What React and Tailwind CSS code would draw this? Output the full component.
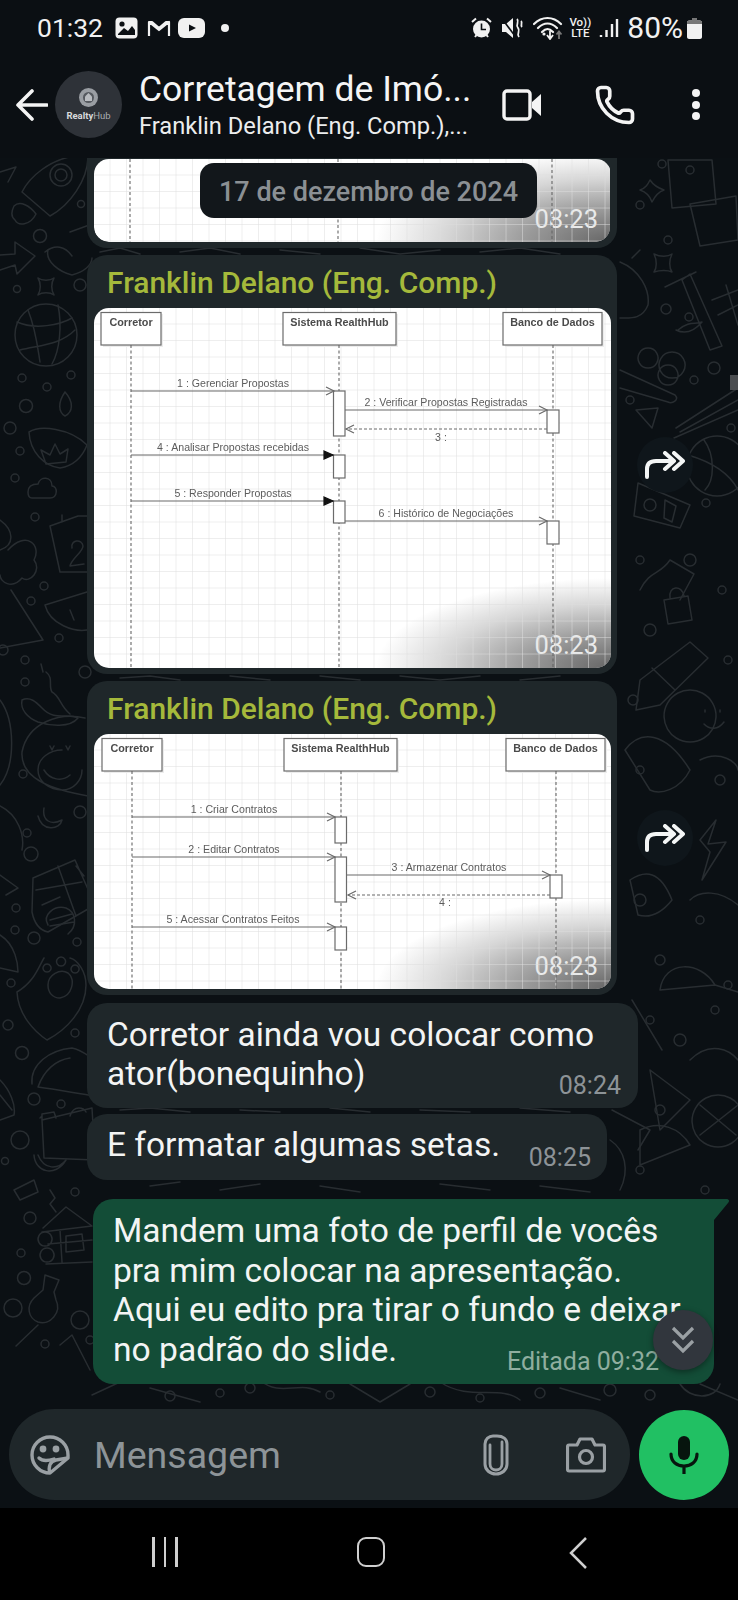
import React from "react";
import { Phone } from "lucide-react";

const Ic = ({ w, h, vb, className = "", children }) => (
  <svg width={w} height={h} viewBox={vb || `0 0 ${w} ${h}`} className={"shrink-0 " + className}>{children}</svg>
);

function Doodles() {
  const dots = [
    [40,236,6.5],[81,204,3.5],[17,289,3.5],[80,285,6],[22,378,4],[47,387,4],[71,375,4],[26,406,6.5],[10,428,6],[20,451,4],[15,478,4],[35,517,4],[44,586,4],[31,601,4],[59,638,4],[25,660,4],[3,650,5],
    [25,682,4],[85,672,6],[23,774,4],[27,833,4],[80,812,6],[31,854,7],[16,908,4],[15,930,4],[34,938,6],[77,942,4],[11,983,4],[8,1025,5],[75,1033,4],[22,1053,6.5],[34,1099,6],[61,1104,4],[20,1140,9],[5,1161,3.5],[75,1192,4],[30,1218,6],[21,1253,4],[24,1278,6.5],[13,1308,9],[45,1344,4],[80,1320,9],[90,1340,4],
    [662,164,4],[690,170,4],[640,205,4],[668,240,4],[666,309,5],[689,317,4],[714,368,6],[694,380,4],[630,400,4],[731,428,4],[706,503,4],[650,505,6],[640,560,4],[690,560,6],[722,590,4],[650,630,6],[633,700,5],[728,660,4],[640,770,4],[720,780,5],[640,900,6],[700,920,4],[660,960,5],[728,985,4],[650,1020,4],[680,1040,6],[715,1010,4],[660,1110,5],[640,1170,4],[705,1190,4],[650,1395,5],[610,1390,6],[250,1388,5],[220,1393,4],[170,1396,5],[430,1392,5],[330,1395,4],[540,1393,5],[480,1398,4],
  ];
  const paths = [
    "M22 192C30 176 50 160 74 156L88 156C88 180 70 205 50 216Z M22 192L50 216 M14 206C20 200 30 206 36 214C30 226 18 226 15 220C10 216 12 210 14 206Z",
    "M0 172L16 167L8 182 M0 255L15 254L15 242L35 256L17 274L15 265L0 270",
    "M48 250C45 262 60 272 72 275C84 272 92 265 92 258M70 232L92 224 M45 252C55 244 65 246 72 256",
    "M38 278C42 281 50 281 54 278C51 283 51 290 54 295C50 292 42 292 38 295C41 290 41 283 38 278Z",
    "M29 432C40 425 70 428 87 445M29 432C30 452 44 466 60 468C72 466 82 458 87 445M65 392C58 402 58 412 65 416C73 412 74 402 65 392M41 450L50 455L55 444L60 454L68 449L66 462M41 450L46 464L66 462",
    "M28 492C28 484 36 484 38 484C40 476 52 476 52 486C58 486 58 498 50 498L32 498C28 498 28 494 28 492Z",
    "M50 526L78 516L92 516M50 526L60 572L92 572 M62 522L62 515M72 548C70 540 82 538 83 546C83 552 72 558 70 566L84 564",
    "M0 520C14 530 15 545 0 550M8 550C26 530 42 545 34 560C42 570 30 584 22 578C12 590 0 582 0 575M11 590L43 640L0 648",
    "M45 605C50 625 75 632 87 630M45 605L87 592M70 610L74 620",
    "M22 700C30 696 36 702 42 708C55 722 68 712 78 718C70 728 50 726 38 722C28 718 20 710 22 700ZM46 672C54 678 48 686 52 692C60 696 60 706 70 714M43 672L41 664",
    "M85 718C60 712 28 722 22 752C20 780 55 790 88 796M62 750C50 750 38 758 38 770C38 782 50 790 62 790C74 790 82 780 82 770M44 770C50 780 62 782 70 775M50 746L52 750L54 746M66 746L68 750L70 746",
    "M0 700C15 720 16 765 0 785M0 806C18 815 25 835 22 850M38 816C42 832 60 830 62 820C50 826 42 820 44 808",
    "M33 878L75 860L95 905L48 932C38 930 34 922 32 912ZM36 890L82 882M58 866L76 916M42 905L60 897M76 866L84 876",
    "M48 925C42 915 54 905 66 908C76 912 78 926 68 934M50 920L72 914M50 926L74 922",
    "M0 875L18 888L6 895M0 935C16 945 18 965 18 972L0 968",
    "M44 958C38 968 34 982 17 992C18 1015 35 1032 47 1040C66 1030 86 1010 86 985C86 972 78 960 70 958M48 985C48 975 60 968 68 973C76 980 72 996 60 998C52 998 48 992 48 985ZM47 964a4 4 0 1 0 0.1 0ZM61 957a4.5 4.5 0 1 0 0.1 0ZM75 965a4 4 0 1 0 0.1 0Z",
    "M32 1084C30 1064 50 1050 72 1048C82 1050 88 1056 95 1060M38 1087C60 1090 80 1094 95 1096M38 1087C44 1070 56 1060 70 1058",
    "M0 1080C10 1090 16 1105 14 1115L0 1120M0 1095L12 1110",
    "M42 1120L92 1108L95 1160L44 1158ZM42 1116L40 1118M42 1120L42 1114L54 1112L56 1118M70 1116C74 1104 84 1108 86 1112M34 1155C35 1172 55 1178 66 1160C58 1170 44 1170 38 1155",
    "M14 1190L34 1180L38 1192L20 1200Z",
    "M43 1228L66 1207L92 1226M42 1232L92 1226M48 1244L92 1240M46 1264L92 1262M60 1230L62 1262M66 1236L82 1234L84 1250L66 1252ZM45 1232a7 7 0 1 0 0.1 0ZM47 1248a7 7 0 1 0 0.1 0Z",
    "M50 1190L55 1198L50 1204L56 1212",
    "M45 1275L59 1280L54 1292L56 1300C62 1312 50 1326 38 1322C28 1318 26 1306 34 1298L43 1290ZM16 1346L38 1325",
    "M60 1345L72 1335L90 1370",
    "M668 160L712 160L716 204L672 208ZM690 204L736 196L738 240L700 246ZM650 180C654 186 658 188 664 190C658 192 654 198 652 202C650 196 646 192 640 190C646 188 648 184 650 180Z",
    "M620 262C640 270 650 290 648 305C642 320 630 318 620 318M632 258L640 250",
    "M654 254C660 257 668 257 672 254C669 260 669 268 672 272C668 270 660 270 654 272C657 268 657 260 654 254Z",
    "M690 274L722 346L710 350L682 280ZM665 287L696 272M678 330C690 320 695 325 702 322C690 336 680 332 676 330M712 300L738 290M718 315L738 305M726 285L738 325",
    "M620 370L675 395C680 400 672 404 668 402L620 388M648 348a10 10 0 1 0 0.1 0ZM672 352a13 13 0 1 0 0.1 0ZM668 365a10 10 0 1 0 0.1 0Z",
    "M676 428L738 388M680 432L738 400M674 438L738 410",
    "M636 410L658 408L652 428Z",
    "M717 436a30 30 0 1 0 0.1 0ZM688 455C705 460 728 470 738 490M704 440C715 455 715 480 705 490",
    "M638 483L690 505L680 528L634 516ZM665 500L676 506L672 522L664 518Z",
    "M664 600L688 596L692 620L668 624ZM670 598C668 586 682 584 684 596",
    "M640 680L690 642L708 658L660 705L636 710ZM652 668L675 690",
    "M690 690a26 26 0 1 0 0.1 0ZM705 710L705 712M720 710L720 712M704 724C710 730 718 730 724 722",
    "M640 590C650 570 660 575 670 560L694 574L680 600",
    "M625 750C640 730 665 730 690 770C680 790 660 795 650 790ZM700 760C720 750 738 762 738 770",
    "M700 840L716 820L708 844L726 842L702 880L710 852Z",
    "M630 880C645 870 660 870 672 900C660 915 648 918 638 915ZM690 900C700 890 720 890 738 905",
    "M660 990C664 960 700 960 715 985L738 992M660 990L715 985",
    "M632 1000L662 1050M690 1060C710 1040 730 1050 738 1060M650 1070L690 1100L660 1130Z",
    "M718 1095a26 26 0 1 0 0.1 0ZM700 1105L736 1135M738 1105L700 1135",
    "M640 1130C660 1120 680 1128 690 1145L640 1165Z",
    "M92 1395L120 1382M150 1388L200 1402M260 1380C280 1398 300 1380 320 1392M350 1384L380 1402L410 1384M440 1382C470 1402 500 1384 520 1400M560 1388L600 1400",
    "M100 252L120 248L140 254M180 252L210 248L240 254M280 250L320 254M360 248L400 254L440 250M480 252L520 248L560 254M120 678L150 676L180 680M230 676L270 680M320 676L360 680M400 676L440 680L480 676M520 680L560 676M120 1110L150 1108L190 1112M240 1110L280 1112M330 1108L370 1112M420 1110L470 1112M520 1108L570 1112M150 1186L180 1182M220 1190L260 1184M320 1186L360 1192M440 1184L490 1190M540 1186L590 1192",
    "M612 1110L650 1130L638 1150M610 1140C625 1150 630 1170 620 1190",
    "M700 1384L738 1400M680 1384C690 1400 715 1400 720 1384",
  ];
  return (
    <svg width="738" height="1350" viewBox="0 158 738 1350" className="absolute left-0 top-0 blur-[0.4px]" fill="none" stroke="#282d31" strokeWidth="1.5" strokeLinecap="round" strokeLinejoin="round">
      {paths.map((d, i) => <path key={i} d={d} />)}
      {dots.map(([x, y, r], i) => <circle key={i} cx={x} cy={y} r={r} />)}
      <circle cx="61" cy="175" r="11" /><circle cx="61" cy="175" r="6" />
      <circle cx="46" cy="335" r="31" />
      <path d="M17 322C35 330 60 325 72 318M20 350C40 345 60 345 75 330M28 310C36 330 38 350 40 362M58 305C62 325 60 350 52 364" />
    </svg>
  );
}

const Box = ({ x, w, label }) => (
  <g>
    <rect x={x + 2} y={6} width={w} height={33} fill="#ececec" />
    <rect x={x} y={4.5} width={w} height={32.5} fill="#fff" stroke="#6b6b6b" strokeWidth="1.2" />
    <text x={x + w / 2} y={17.5} textAnchor="middle" fontFamily="'Liberation Sans', sans-serif" fontWeight="700" fontSize="10.8" fill="#4b4b4b">{label}</text>
  </g>
);

function Diagram({ id, h, boxes, lines, acts, arrows, labels, scrim }) {
  return (
    <div className="grid w-[517px] grid-rows-[minmax(0,1fr)] overflow-hidden rounded-[15px] bg-white" style={{ height: h }}>
      <svg width="517" height={h} viewBox={`0 0 517 ${h}`} className="col-start-1 row-start-1 block blur-[0.35px]">
        <defs>
          <pattern id={id} width="16.5" height="16.5" patternUnits="userSpaceOnUse">
            <path d="M16.5 0V16.5H0" fill="none" stroke="#dedede" strokeWidth="1" />
          </pattern>
        </defs>
        <rect width="517" height={h} fill={`url(#${id})`} />
        {boxes && boxes.map((b) => <Box key={b.label} {...b} />)}
        {lines.map((x, i) => <line key={i} x1={x} x2={x} y1={boxes ? 37 : 0} y2={h} stroke="#666" strokeWidth="1.1" strokeDasharray="3 2.5" />)}
        {acts && acts.map(([x, y, w, ah], i) => <rect key={i} x={x} y={y} width={w} height={ah} fill="#fff" stroke="#6b6b6b" strokeWidth="1.2" />)}
        {arrows && arrows.map(([x1, x2, y, kind], i) => (
          <g key={i} stroke="#6a6a6a" strokeWidth="1.2" fill="none">
            <line x1={x1} x2={x2} y1={y} y2={y} strokeDasharray={kind === "dash" ? "3 2" : undefined} />
            {kind === "fill" ? (
              <polygon points={`${x2 - 9},${y - 4} ${x2},${y} ${x2 - 9},${y + 4}`} fill="#111" stroke="#111" />
            ) : kind === "dash" ? (
              <polyline points={`${x2 + 8},${y - 4} ${x2},${y} ${x2 + 8},${y + 4}`} />
            ) : (
              <polyline points={`${x2 - 8},${y - 4} ${x2},${y} ${x2 - 8},${y + 4}`} />
            )}
          </g>
        ))}
        {labels && labels.map(([t, x, y], i) => (
          <text key={i} x={x} y={y} textAnchor="middle" fontFamily="'Liberation Sans', sans-serif" fontSize="10.6" fill="#5c5c5c">{t}</text>
        ))}
      </svg>
      {scrim}
      <div className="col-start-1 row-start-1 self-end justify-self-end pr-[13px] pb-[8px] text-[25.5px] leading-[30px] text-[#e9eaea]">08:23</div>
    </div>
  );
}

const Scrim = () => (
  <div className="col-start-1 row-start-1 self-end justify-self-end w-[240px] h-[92px] bg-[radial-gradient(ellipse_235px_90px_at_100%_100%,rgba(50,50,50,0.75)_0%,rgba(50,50,50,0.5)_35%,rgba(50,50,50,0.2)_70%,rgba(50,50,50,0)_100%)]" />
);

function ForwardBtn() {
  return (
    <div className="ml-[20px] flex h-[56px] w-[56px] items-center justify-center rounded-full bg-[#0f161b]">
      <Ic w={40} h={28} vb="0 0 40 28">
        <path d="M2 26V18C2 12 6 10 11 10H27" fill="none" stroke="#f4f6f6" strokeWidth="4" strokeLinecap="round" strokeLinejoin="round" />
        <path d="M20 2L29 10L20 18M29 2L38 10L29 18" fill="none" stroke="#f4f6f6" strokeWidth="4" strokeLinecap="round" strokeLinejoin="round" />
      </Ic>
    </div>
  );
}

function Incoming({ name, children }) {
  return (
    <div className="flex items-center pl-[87px]">
      <div className="w-[530px] rounded-[20px] bg-[#1f272a] px-[7px] pb-[6px]">
        <div className="h-[53px] pl-[13px] pt-[10px] text-[30px] font-medium leading-[36px] text-[#a5b93b]">{name}</div>
        {children}
      </div>
      <ForwardBtn />
    </div>
  );
}

export default function App() {
  return (
    <div className="flex h-[1600px] w-[738px] flex-col overflow-hidden bg-[#0b0f13] font-['Roboto',sans-serif] text-white">
      {/* status bar */}
      <div className="flex h-[56px] items-center justify-between pl-[37px] pr-[36px]">
        <div className="flex items-center">
          <span className="text-[26.5px] leading-[30px] text-[#f1f1f1]">01:32</span>
          <Ic w={23} h={22} className="ml-[12px]"><rect x="0.5" y="0.5" width="22" height="21" rx="4" fill="#f1f1f1" /><circle cx="7" cy="7" r="2.6" fill="#0b0f13" /><path d="M3 17L9 11L13 14L17 9L20 13V18H3Z" fill="#0b0f13" /></Ic>
          <Ic w={24} h={19} className="ml-[9px]"><path d="M2 17V3L12 11L22 3V17M2 3H5L12 9L19 3H22" fill="none" stroke="#f1f1f1" strokeWidth="2.2" strokeLinejoin="round" /></Ic>
          <Ic w={27} h={20} className="ml-[7px]"><rect width="27" height="20" rx="6" fill="#f1f1f1" /><path d="M11 6.5L18 10L11 13.5Z" fill="#0b0f13" /></Ic>
          <span className="ml-[16px] h-[8px] w-[8px] rounded-full bg-[#f1f1f1]" />
        </div>
        <div className="flex items-center">
          <Ic w={21} h={22}><circle cx="10.5" cy="12" r="8.5" fill="#f1f1f1" /><path d="M10.5 6.5V12.5H15" fill="none" stroke="#0b0f13" strokeWidth="1.6" /><path d="M1 5L5 1.5M20 5L16 1.5M4 20L5.5 18M17 20L15.5 18" stroke="#f1f1f1" strokeWidth="2" /></Ic>
          <Ic w={21} h={20} className="ml-[10px]"><path d="M0 6H4L11 0V20L4 14H0Z" fill="#f1f1f1" /><path d="M1 2L13 18" stroke="#0b0f13" strokeWidth="1.6" /><path d="M15 1C18 4 13 6 16 10C19 13 14 15 17 19M19 3C21 5 18 7 20 9" fill="none" stroke="#f1f1f1" strokeWidth="1.8" /></Ic>
          <Ic w={30} h={24} className="ml-[10px]"><path d="M1 8C9 0 20 0 28 8M5 12C11 6 18 6 24 12M9 16C13 12 16 12 20 16" fill="none" stroke="#f1f1f1" strokeWidth="2.2" strokeLinecap="round" /><path d="M17 15V22M14 19L17 23L20 19" fill="none" stroke="#f1f1f1" strokeWidth="1.8" /><path d="M26 23V16M23.5 18.5L26 15.5L28.5 18.5" fill="none" stroke="#777" strokeWidth="1.8" /><circle cx="11" cy="18" r="1.6" fill="#f1f1f1" /></Ic>
          <div className="ml-[6px] flex w-[22px] flex-col items-center text-[11.5px] font-medium leading-[11px] text-[#f1f1f1]"><span>Vo))</span><span>LTE</span></div>
          <Ic w={20} h={22} className="ml-[8px]"><path d="M2 18V20M7.5 13V20M13 7V20M18 2V20" stroke="#f1f1f1" strokeWidth="2.4" /></Ic>
          <span className="ml-[8px] text-[30px] leading-[30px] text-[#f1f1f1]">80%</span>
          <Ic w={15} h={21} className="ml-[4px]"><path d="M5 0H10V2.5H13C14 2.5 15 3.5 15 4.5V19C15 20 14 21 13 21H2C1 21 0 20 0 19V4.5C0 3.5 1 2.5 2 2.5H5Z" fill="#f1f1f1" /><path d="M5 0H10V2.5H13C14 2.5 15 3.5 15 4.5V6H0V4.5C0 3.5 1 2.5 2 2.5H5Z" fill="#777" /></Ic>
        </div>
      </div>

      {/* header */}
      <div className="flex h-[102px] items-center pb-[5px] pl-[16px]">
        <Ic w={32} h={32}><path d="M31 16H2M16 2L2 16L16 30" fill="none" stroke="#f4f4f4" strokeWidth="3.6" strokeLinecap="round" strokeLinejoin="round" /></Ic>
        <div className="ml-[7px] flex h-[67px] w-[67px] shrink-0 flex-col items-center justify-center rounded-full bg-[#2e3238]">
          <Ic w={21} h={21}><circle cx="10.5" cy="10.5" r="9.5" fill="#9a9ea3" /><circle cx="10.5" cy="10.5" r="5.5" fill="#55595f" /><path d="M10.5 6L14 9.5V14H7V9.5Z" fill="#b9bcc0" /></Ic>
          <div className="mt-[2px] text-[9.5px] font-bold leading-[12px] text-[#d8dadc]">Realty<span className="font-normal text-[#a9adb1]">Hub</span></div>
        </div>
        <div className="ml-[17px] w-[340px] shrink-0">
          <div className="whitespace-nowrap text-[35.5px] leading-[41px] text-[#f5f5f5]">Corretagem de Imó...</div>
          <div className="mt-[2px] whitespace-nowrap text-[23.7px] leading-[28px] text-[#ecedee]">Franklin Delano (Eng. Comp.),...</div>
        </div>
        <Ic w={40} h={32} className="ml-[23px]"><rect x="2" y="2" width="26" height="28" rx="3" fill="none" stroke="#f4f4f4" strokeWidth="3.4" /><path d="M30 13L39 5V27L30 19Z" fill="#f4f4f4" /></Ic>
        <Phone size={42} strokeWidth={2.1} color="#f4f4f4" className="ml-[52px] shrink-0" />
        <div className="ml-[56px] flex flex-col gap-[3.5px]">
          <span className="h-[8px] w-[8px] rounded-full bg-[#f4f4f4]" />
          <span className="h-[8px] w-[8px] rounded-full bg-[#f4f4f4]" />
          <span className="h-[8px] w-[8px] rounded-full bg-[#f4f4f4]" />
        </div>
      </div>

      {/* chat */}
      <div className="relative h-[1350px] overflow-hidden bg-[#0b1014]">
        <Doodles />
        <div className="relative flex flex-col">
          {/* clipped bubble */}
          <div className="ml-[87px] w-[530px] rounded-b-[20px] bg-[#1f272a] px-[7px] pb-[6px] pt-[1px]">
            <div className="overflow-hidden rounded-b-[15px]">
              <Diagram id="g1" h={83} lines={[36, 244, 458]} scrim={<Scrim />} />
            </div>
          </div>

          <div className="mt-[7px]">
            <Incoming name="Franklin Delano (Eng. Comp.)">
              <Diagram
                id="g2"
                h={360}
                boxes={[{ x: 7, w: 60, label: "Corretor" }, { x: 189, w: 113, label: "Sistema RealthHub" }, { x: 409, w: 99, label: "Banco de Dados" }]}
                lines={[37, 245, 459]}
                acts={[[239.5, 83, 11.5, 45], [453, 102, 12, 23], [239.5, 147, 11.5, 23], [239.5, 193, 11.5, 22], [453, 213, 12, 23]]}
                arrows={[[37, 240, 83], [251, 453, 102], [453, 252, 121, "dash"], [37, 239, 147, "fill"], [37, 239, 193, "fill"], [251, 453, 213]]}
                labels={[["1 : Gerenciar Propostas", 139, 79], ["2 : Verificar Propostas Registradas", 352, 98], ["3 :", 347, 133], ["4 : Analisar Propostas recebidas", 139, 143], ["5 : Responder Propostas", 139, 189], ["6 : Histórico de Negociações", 352, 209]]}
                scrim={<Scrim />}
              />
            </Incoming>
          </div>

          <div className="mt-[7px]">
            <Incoming name="Franklin Delano (Eng. Comp.)">
              <Diagram
                id="g3"
                h={255}
                boxes={[{ x: 8, w: 60, label: "Corretor" }, { x: 190, w: 113, label: "Sistema RealthHub" }, { x: 412, w: 99, label: "Banco de Dados" }]}
                lines={[38, 247, 462]}
                acts={[[241, 83, 11.5, 26], [241, 123, 11.5, 45], [456, 141, 12, 23], [241, 193, 11.5, 23]]}
                arrows={[[38, 241, 83], [38, 241, 123], [253, 456, 141], [456, 254, 161, "dash"], [38, 241, 193]]}
                labels={[["1 : Criar Contratos", 140, 79], ["2 : Editar Contratos", 140, 119], ["3 : Armazenar Contratos", 355, 137], ["4 :", 351, 172], ["5 : Acessar Contratos Feitos", 139, 189]]}
                scrim={<Scrim />}
              />
            </Incoming>
          </div>

          <div className="ml-[87px] mt-[8px] grid h-[105px] w-[551px] grid-cols-[minmax(0,1fr)] rounded-[20px] bg-[#1f272a] pl-[20px] pr-[17px] pt-[12px] text-[33.5px] leading-[39px] text-[#f3f4f4]">
            <div className="col-start-1 row-start-1 whitespace-nowrap">Corretor ainda vou colocar como<br />ator(bonequinho)</div>
            <div className="col-start-1 row-start-1 self-end justify-self-end pb-[7px] text-[25px] leading-[30px] text-[#8d9397]">08:24</div>
          </div>

          <div className="ml-[87px] mt-[6px] grid h-[66px] w-[520px] grid-cols-[minmax(0,1fr)] rounded-[20px] bg-[#1f272a] pl-[20px] pr-[16px] pt-[12px] text-[33.5px] leading-[38px] text-[#f3f4f4]">
            <div className="col-start-1 row-start-1 whitespace-nowrap">E formatar algumas setas.</div>
            <div className="col-start-1 row-start-1 self-end justify-self-end pb-[7px] text-[25px] leading-[30px] text-[#8d9397]">08:25</div>
          </div>

          <div className="relative ml-[93px] mt-[19px] grid h-[185px] w-[621px] grid-cols-[minmax(0,1fr)] rounded-[20px] rounded-tr-none bg-[#134d37] pl-[20px] pr-[55px] pt-[12px] text-[33.6px] leading-[39.5px] text-[#f3f5f4]">
            <svg width="16" height="22" viewBox="0 0 16 22" className="absolute left-full top-0"><path d="M0 0H12C15 0 16 2 14 4L0 21Z" fill="#134d37" /></svg>
            <div className="col-start-1 row-start-1 whitespace-nowrap">Mandem uma foto de perfil de vocês<br />pra mim colocar na apresentação.<br />Aqui eu edito pra tirar o fundo e deixar<br />no padrão do slide.</div>
            <div className="col-start-1 row-start-1 self-end justify-self-end pb-[7px] text-[25px] leading-[30px] text-[#8fae9f]">Editada 09:32</div>
          </div>

          {/* input */}
          <div className="mt-[25px] flex items-center pl-[9px]">
            <div className="flex h-[91px] w-[621px] items-center rounded-full bg-[#1f272a] pl-[21px]">
              <Ic w={40} h={40} vb="0 0 40 40">
                <path d="M38 20A18 18 0 1 0 20 38L38 23Z" fill="none" stroke="#9aa0a4" strokeWidth="3.4" strokeLinejoin="round" />
                <path d="M20 38C18 32 20 26 26 25L38 23" fill="none" stroke="#9aa0a4" strokeWidth="3.4" />
                <circle cx="13" cy="14" r="3.4" fill="#9aa0a4" /><circle cx="26" cy="14" r="3.4" fill="#9aa0a4" />
                <path d="M9 23C12 26 18 26 24 24" fill="none" stroke="#9aa0a4" strokeWidth="3.4" strokeLinecap="round" />
              </Ic>
              <span className="ml-[24px] text-[37.5px] leading-[40px] text-[#8d9498]">Mensagem</span>
              <Ic w={26} h={42} vb="0 0 26 42" className="ml-[202px]">
                <path d="M7 11V30C7 34 10 36 13 36C16 36 19 34 19 30V8" fill="none" stroke="#9aa0a4" strokeWidth="2.8" strokeLinecap="round" />
                <path d="M2 10C2 5 6 2 10 2H14C20 2 24 5 24 10V30C24 36 19 40 13 40C7 40 2 36 2 30Z" fill="none" stroke="#9aa0a4" strokeWidth="3" />
              </Ic>
              <Ic w={40} h={36} vb="0 0 40 36" className="ml-[57px]">
                <path d="M3 8H11L14 2H26L29 8H37C38 8 38.5 9 38.5 10V32C38.5 33 38 34 37 34H3C2 34 1.5 33 1.5 32V10C1.5 9 2 8 3 8Z" fill="none" stroke="#9aa0a4" strokeWidth="3.2" strokeLinejoin="round" />
                <circle cx="20" cy="20" r="6.5" fill="none" stroke="#9aa0a4" strokeWidth="3.2" />
              </Ic>
            </div>
            <div className="ml-[9px] flex h-[90px] w-[90px] items-center justify-center rounded-full bg-[#21c063]">
              <Ic w={30} h={38} vb="0 0 30 38">
                <rect x="9" y="0" width="12" height="24" rx="6" fill="#07150e" />
                <path d="M2 18C2 26 8 30 15 30C22 30 28 26 28 18M15 30V38" fill="none" stroke="#07150e" strokeWidth="3.2" strokeLinecap="round" />
              </Ic>
            </div>
          </div>
        </div>

        {/* overlays */}
        <div className="absolute left-[200px] top-[5px] flex h-[55px] w-[337px] items-center justify-center rounded-[14px] bg-[#12171b] pt-[3px] text-[27px] font-medium text-[#8b9094]">17 de dezembro de 2024</div>
        <div className="absolute right-0 top-[217px] h-[15px] w-[8px] bg-[#4a4d50]" />
        <div className="absolute left-[653px] top-[1152px] flex h-[60px] w-[60px] items-center justify-center rounded-full bg-[#31363d] shadow-[0_2px_6px_rgba(0,0,0,0.4)]">
          <Ic w={24} h={28} vb="0 0 24 28"><path d="M2 2L12 12L22 2M2 15L12 25L22 15" fill="none" stroke="#9aa0a4" strokeWidth="3.2" /></Ic>
        </div>
      </div>

      {/* nav */}
      <div className="flex flex-1 items-start bg-black pl-[152px] pt-[29px]">
        <div className="flex h-[30px] gap-[9px]">
          <span className="h-full w-[2.5px] bg-[#cfcfcf]" /><span className="h-full w-[2.5px] bg-[#cfcfcf]" /><span className="h-full w-[2.5px] bg-[#cfcfcf]" />
        </div>
        <div className="ml-[179px] h-[30px] w-[28px] rounded-[9px] border-[2.5px] border-[#cfcfcf]" />
        <Ic w={20} h={32} vb="0 0 20 32" className="ml-[183px]"><path d="M18 1L3 16L18 31" fill="none" stroke="#cfcfcf" strokeWidth="2.5" /></Ic>
      </div>
    </div>
  );
}
